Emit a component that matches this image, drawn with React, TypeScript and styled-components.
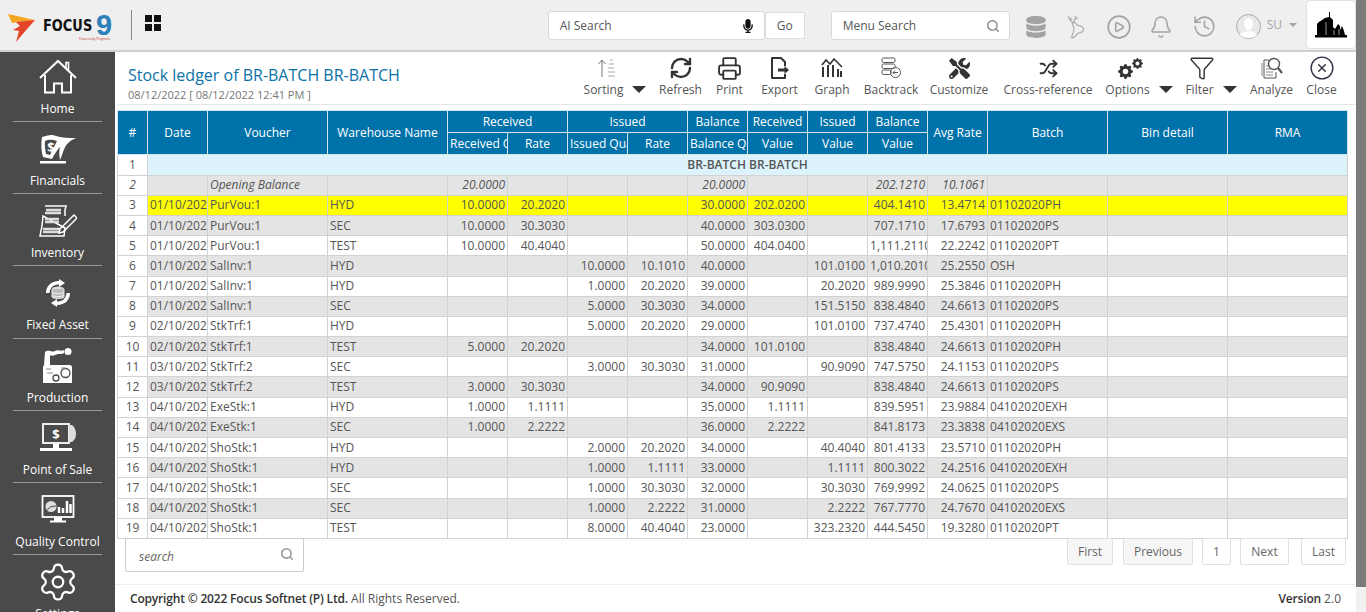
import React from 'react';
import styled, { createGlobalStyle } from 'styled-components';
import { RefreshCw, Printer, Shuffle, Funnel, CircleX, Settings, Search, Bell, History, CirclePlay } from 'lucide-react';
import { FaTools, FaDatabase, FaMicrophone } from 'react-icons/fa';
import { BsGearFill } from 'react-icons/bs';

const GlobalStyle = createGlobalStyle`
  html, body { margin: 0; padding: 0; height: 612px; overflow: hidden; background: #fff; }
  body { font-family: "Open Sans", "Liberation Sans", sans-serif; font-size: 12px; color: #555; }
  * { box-sizing: border-box; }
`;

type Row = (string | undefined)[];
const _ = undefined;

// idx, date, voucher, wh, recQ, recR, issQ, issR, balQ, recV, issV, balV, avg, batch
const rows: Row[] = [
  ['3', '01/10/2022', 'PurVou:1', 'HYD', '10.0000', '20.2020', _, _, '30.0000', '202.0200', _, '404.1410', '13.4714', '01102020PH'],
  ['4', '01/10/2022', 'PurVou:1', 'SEC', '10.0000', '30.3030', _, _, '40.0000', '303.0300', _, '707.1710', '17.6793', '01102020PS'],
  ['5', '01/10/2022', 'PurVou:1', 'TEST', '10.0000', '40.4040', _, _, '50.0000', '404.0400', _, '1,111.2110', '22.2242', '01102020PT'],
  ['6', '01/10/2022', 'SalInv:1', 'HYD', _, _, '10.0000', '10.1010', '40.0000', _, '101.0100', '1,010.2010', '25.2550', 'OSH'],
  ['7', '01/10/2022', 'SalInv:1', 'HYD', _, _, '1.0000', '20.2020', '39.0000', _, '20.2020', '989.9990', '25.3846', '01102020PH'],
  ['8', '01/10/2022', 'SalInv:1', 'SEC', _, _, '5.0000', '30.3030', '34.0000', _, '151.5150', '838.4840', '24.6613', '01102020PS'],
  ['9', '02/10/2022', 'StkTrf:1', 'HYD', _, _, '5.0000', '20.2020', '29.0000', _, '101.0100', '737.4740', '25.4301', '01102020PH'],
  ['10', '02/10/2022', 'StkTrf:1', 'TEST', '5.0000', '20.2020', _, _, '34.0000', '101.0100', _, '838.4840', '24.6613', '01102020PH'],
  ['11', '03/10/2022', 'StkTrf:2', 'SEC', _, _, '3.0000', '30.3030', '31.0000', _, '90.9090', '747.5750', '24.1153', '01102020PS'],
  ['12', '03/10/2022', 'StkTrf:2', 'TEST', '3.0000', '30.3030', _, _, '34.0000', '90.9090', _, '838.4840', '24.6613', '01102020PS'],
  ['13', '04/10/2022', 'ExeStk:1', 'HYD', '1.0000', '1.1111', _, _, '35.0000', '1.1111', _, '839.5951', '23.9884', '04102020EXH'],
  ['14', '04/10/2022', 'ExeStk:1', 'SEC', '1.0000', '2.2222', _, _, '36.0000', '2.2222', _, '841.8173', '23.3838', '04102020EXS'],
  ['15', '04/10/2022', 'ShoStk:1', 'HYD', _, _, '2.0000', '20.2020', '34.0000', _, '40.4040', '801.4133', '23.5710', '01102020PH'],
  ['16', '04/10/2022', 'ShoStk:1', 'HYD', _, _, '1.0000', '1.1111', '33.0000', _, '1.1111', '800.3022', '24.2516', '04102020EXH'],
  ['17', '04/10/2022', 'ShoStk:1', 'SEC', _, _, '1.0000', '30.3030', '32.0000', _, '30.3030', '769.9992', '24.0625', '01102020PS'],
  ['18', '04/10/2022', 'ShoStk:1', 'SEC', _, _, '1.0000', '2.2222', '31.0000', _, '2.2222', '767.7770', '24.7670', '04102020EXS'],
  ['19', '04/10/2022', 'ShoStk:1', 'TEST', _, _, '8.0000', '40.4040', '23.0000', _, '323.2320', '444.5450', '19.3280', '01102020PT'],
];

const colWidths = [30, 60, 120, 120, 60, 60, 60, 60, 60, 60, 60, 60, 60, 120, 120, 120];
const isText = (i: number) => i === 1 || i === 2 || i === 3 || i === 13;

/* sidebar drawings */
const HomeIcon = () => (
  <svg width="38" height="36" viewBox="0 0 38 36" fill="none" stroke="#fff" strokeWidth="2">
    <path d="M1 19 L19 2 L37 19" />
    <path d="M27 9 V3.5 H29.5 V12" strokeWidth="1.6" />
    <path d="M6 16 V33.5 H15 V24.5 H23 V33.5 H32 V16" />
  </svg>
);
const FinancialsIcon = () => (
  <svg width="38" height="30" viewBox="0 0 38 30" fill="#fff">
    <path d="M3 3 C10 1 13 0 17 2 C24 4 30 4 37 4 C30 7 27 10 24 18 C23 21 22 24 21 26 C20 21 20 17 21 13 C18 16 15 21 13 25 L4 23 C2 17 2 9 3 3 Z" />
    <path d="M6 7 C10 5 14 6 18 7 C16 11 14 15 11 21 L7 20 C6 15 5.5 11 6 7 Z" fill="#4a4a4a" />
    <rect x="1" y="27" width="26" height="2.500" />
    <text x="12" y="18" fontFamily="Open Sans" fontWeight="700" fontSize="13" textAnchor="middle">$</text>
  </svg>
);
const InventoryIcon = () => (
  <svg width="38" height="32" viewBox="0 0 38 32" fill="none" stroke="#fff" strokeWidth="1.500">
    <path d="M6 1 H27 L26 5 V11 M26 23 L25 31 H1 L3 21 L4 11 Z" />
    <path d="M7 5 H22 M6 8 H22 M6 14 H20 M6 17 H20 M4 24 H21 M4 27 H21" strokeWidth="2.500" stroke="#ddd" />
    <path d="M21 24 L35 10 L38 13 L24 27 L20 28 Z" />
  </svg>
);
const FixedAssetIcon = () => (
  <svg width="28" height="28" viewBox="0 0 28 28" fill="none">
    <path d="M2 14 C2 7 7 2 15 2 L15 0 L21 4 L15 8 L15 5.500 C10 5.500 6 8 5.500 14 Z" fill="#fff" />
    <path d="M26 14 C26 21 21 26 13 26 L13 28 L7 24 L13 20 L13 22.500 C18 22.500 22 20 22.500 14 Z" fill="#fff" />
    <ellipse cx="14" cy="10" rx="6" ry="2.500" fill="#ddd" />
    <path d="M8 10 V18 C8 20 20 20 20 18 V10" fill="#bbb" stroke="#fff" strokeWidth="0.800" />
    <path d="M8 13 C8 15 20 15 20 13 M8 16 C8 18 20 18 20 16" stroke="#fff" strokeWidth="0.800" />
  </svg>
);
const ProductionIcon = () => (
  <svg width="32" height="36" viewBox="0 0 32 36" fill="#fff">
    <path d="M2 17 L3 4 C7 1 10 5 13 3 C16 1 19 4 22 2 L22 5 C19 7 16 5 13 7 C10 9 9 6 8 8 L8 17 Z" />
    <circle cx="26" cy="3.500" r="3.500" />
    <path d="M1 19 C1 18 2 17 3 17 H28 C29 17 30 18 30 19 V35 H1 Z" />
    <g fill="#fff" stroke="#4a4a4a" strokeWidth="1.300">
      <circle cx="23.500" cy="25" r="4.500" />
      <circle cx="14" cy="30" r="3" />
    </g>
    <path d="M4 21 H9 M5 25 H11 M19 20 H24" stroke="#888" strokeWidth="1.200" />
  </svg>
);
const PosIcon = () => (
  <svg width="38" height="30" viewBox="0 0 38 30" fill="none" stroke="#fff">
    <rect x="4" y="1" width="26" height="19" strokeWidth="1.800" />
    <path d="M30 2 H33 C36 4 37 8 37 11 C37 14 36 17 33 19 H30 Z" fill="#ddd" stroke="none" />
    <path d="M14 21 H20 V25 H14 Z" fill="#fff" stroke="none" />
    <path d="M1 26.500 H33" strokeWidth="3" />
    <text x="17" y="16" fill="#fff" stroke="none" fontFamily="Open Sans" fontWeight="700" fontSize="13" textAnchor="middle">$</text>
  </svg>
);
const QualityIcon = () => (
  <svg width="34" height="30" viewBox="0 0 34 30" fill="none" stroke="#fff">
    <rect x="1.500" y="1" width="31" height="21" strokeWidth="1.800" />
    <circle cx="10" cy="11.500" r="5.500" fill="#ddd" stroke="none" />
    <path d="M10 11.500 L15 11 M10 11.500 L6 15" stroke="#4a4a4a" />
    <path d="M18 18 V12 M22 18 V13 M26 18 V6 M29.500 18 V9" strokeWidth="2.500" />
    <path d="M14 23 H20 V25 H14 Z M9 26.500 H25" strokeWidth="2" />
  </svg>
);

/* toolbar drawings */
const SortIcon = () => (
  <svg width="20" height="20" viewBox="0 0 20 20" fill="none" stroke="#777" strokeWidth="1">
    <path d="M6 19 V2 M2.500 6 L6 2 L9.500 6" />
    <path d="M14 2 H17 M13 6 H18 M12 10 H18 M12 14 H19 M12 18 H19" stroke="#aaa" />
  </svg>
);
const ExportIcon = () => (
  <svg width="20" height="22" viewBox="0 0 20 22" fill="none" stroke="#333" strokeWidth="2">
    <path d="M15 9 V5 L11 1 H2 V21 H15 V17" strokeLinejoin="round" />
    <path d="M8 13 H15" strokeWidth="3" />
    <path d="M14.500 9 L19 13 L14.500 17 Z" fill="#333" stroke="none" />
  </svg>
);
const GraphIcon = () => (
  <svg width="22" height="20" viewBox="0 0 22 20" fill="#333">
    <path d="M1 7 L5 2 L9 6 L13 1 L21 9" fill="none" stroke="#333" strokeWidth="1.600" />
    <path d="M1 9 H3 V19 H1 Z M6 7 H8 V19 H6 Z M11 7 H13 V19 H11 Z M16 11 H18 V19 H16 Z M19 13 H21 V19 H19 Z" />
  </svg>
);
const BacktrackIcon = () => (
  <svg width="22" height="22" viewBox="0 0 22 22" fill="none" stroke="#555" strokeWidth="1">
    <rect x="2" y="1" width="13" height="4.500" rx="1.500" />
    <rect x="2" y="7" width="13" height="4.500" rx="1.500" />
    <rect x="2" y="13" width="9" height="4.500" rx="1.500" />
    <circle cx="15.500" cy="15.500" r="5" />
    <path d="M13 15.500 H18 M15 13.500 L13 15.500 L15 17.500" />
  </svg>
);
const OptionsIcon = () => (
  <Gears>
    <BsGearFill size={15} />
    <BsGearFill size={11} />
  </Gears>
);
const AnalyzeIcon = () => (
  <svg width="22" height="22" viewBox="0 0 22 22" fill="none" stroke="#555" strokeWidth="1">
    <path d="M8 3 H3 V21 H15 V15" />
    <path d="M1 6 V19 M5 9 H9 M5 12 H9 M5 15 H12 M5 18 H12" stroke="#888" />
    <circle cx="13" cy="7" r="5.500" strokeWidth="1.400" />
    <path d="M17 11 L21 16" strokeWidth="2.200" />
  </svg>
);

const DeerIcon = () => (
  <svg width="17" height="24" viewBox="0 0 17 24" fill="none" stroke="#a8a8a8" strokeWidth="1.100">
    <path d="M1 1 L3 5 L5 3 M3 5 L6 8 L8 4 M8 4 L9 1 M8 4 L11 3" />
    <path d="M5 8 L7 13 C7 18 4 20 5 23 C8 23 9 20 11 18 C15 18 16.500 16 16.500 13 C15 11 12 11 10 10 L7 7" />
  </svg>
);
const SkylineIcon = () => (
  <svg width="32" height="26" viewBox="0 0 32 26" fill="#000">
    <path d="M0 23 H32 V25.500 H0 Z" />
    <path d="M2 23 V12 C4 9 8 8 10 6 L14 5 V0 H15 V5 L18 8 V15 L20 17 L23 12 L25 14 V18 L27 14 L29 19 L30 23 Z" />
    <path d="M11 10 V23 M19 18 V23 M24 17 V23" stroke="#fff" strokeWidth="0.600" />
  </svg>
);
const AvatarIcon = () => (
  <svg width="25" height="25" viewBox="0 0 25 25">
    <circle cx="12.500" cy="12.500" r="12" fill="#e9e9e9" stroke="#aaa" />
    <ellipse cx="12.500" cy="10" rx="4.500" ry="6" fill="#fff" />
    <path d="M4 21 C6 16 19 16 21 21 C17 25 8 25 4 21 Z" fill="#fff" />
  </svg>
);

const tools: { label: string; icon: React.ReactNode; caret?: boolean; w: number; ml?: number }[] = [
  { label: 'Sorting', icon: <SortIcon />, caret: true, w: 78 },
  { label: 'Refresh', icon: <RefreshCw size={24} color="#333" strokeWidth={2.400} />, w: 53 },
  { label: 'Print', icon: <Printer size={25} color="#333" strokeWidth={1.800} />, w: 45 },
  { label: 'Export', icon: <ExportIcon />, w: 55 },
  { label: 'Graph', icon: <GraphIcon />, w: 50 },
  { label: 'Backtrack', icon: <BacktrackIcon />, w: 60, ml: 4 },
  { label: 'Customize', icon: <FaTools size={21} color="#333" />, w: 76 },
  { label: 'Cross-reference', icon: <Shuffle size={19} color="#333" strokeWidth={2.400} />, w: 102 },
  { label: 'Options', icon: <OptionsIcon />, caret: true, w: 80 },
  { label: 'Filter', icon: <Funnel size={26} color="#333" strokeWidth={1.300} />, caret: true, w: 64 },
  { label: 'Analyze', icon: <AnalyzeIcon />, w: 57 },
  { label: 'Close', icon: <CircleX size={26} color="#334" strokeWidth={1.300} />, w: 43 },
];

const menu: { label: string; icon: React.ReactNode }[] = [
  { label: 'Home', icon: <HomeIcon /> },
  { label: 'Financials', icon: <FinancialsIcon /> },
  { label: 'Inventory', icon: <InventoryIcon /> },
  { label: 'Fixed Asset', icon: <FixedAssetIcon /> },
  { label: 'Production', icon: <ProductionIcon /> },
  { label: 'Point of Sale', icon: <PosIcon /> },
  { label: 'Quality Control', icon: <QualityIcon /> },
  { label: 'Settings', icon: <Settings size={42} color="#fff" strokeWidth={1.300} /> },
];

const App: React.FC = () => {
  return (
    <>
      <GlobalStyle />
      <Page>
        <Main>
          <TopBar>
            <Logo>
              <svg width="30" height="30" viewBox="0 0 30 30">
                <path d="M0 1 L27 7 L4 10 Z" fill="#f5a623" />
                <path d="M8 9 L27 7 L13 23 L8 29 L11 18 L5 17 L12 13 Z" fill="#e2452a" />
              </svg>
              <LogoWord>FOCUS</LogoWord>
              <LogoNine>9</LogoNine>
              <LogoTag>Powered by Pragmatic</LogoTag>
            </Logo>
            <Divider />
            <AppGrid>
              <i /><i /><i /><i />
            </AppGrid>
            <Spacer />
            <SearchBox $w={217}>
              <span>AI Search</span>
              <FaMicrophone size={14} color="#111" />
            </SearchBox>
            <GoButton>Go</GoButton>
            <SearchBox $w={179}>
              <span>Menu Search</span>
              <Search size={14} color="#888" strokeWidth={2.400} />
            </SearchBox>
            <TopIcons>
              <FaDatabase size={22} color="#a3a3a3" />
              <DeerSlot><DeerIcon /></DeerSlot>
              <CirclePlay size={26} color="#a3a3a3" strokeWidth={1.500} />
              <BellSlot><Bell size={24} color="#a3a3a3" strokeWidth={1.500} /></BellSlot>
              <History size={25} color="#a3a3a3" strokeWidth={1.500} />
              <User>
                <AvatarIcon />
                <span>SU</span>
                <SmallCaret />
              </User>
            </TopIcons>
            <CompanyLogo>
              <SkylineIcon />
            </CompanyLogo>
          </TopBar>
          <Body>
            <Sidebar>
              {menu.map((m) => (
                <MenuItem key={m.label}>
                  <MenuIcon>{m.icon}</MenuIcon>
                  <MenuLabel>{m.label}</MenuLabel>
                </MenuItem>
              ))}
            </Sidebar>
            <Content>
              <ReportHead>
                <div>
                  <Title>Stock ledger of BR-BATCH BR-BATCH</Title>
                  <SubTitle>08/12/2022 [ 08/12/2022 12:41 PM ]</SubTitle>
                </div>
                <Toolbar>
                  {tools.map((t) => (
                    <Tool key={t.label} $w={t.w} $ml={t.ml}>
                      <ToolIcon $shift={t.caret}>{t.icon}</ToolIcon>
                      <ToolLabel>
                        {t.label}
                        {t.caret && <Caret />}
                      </ToolLabel>
                    </Tool>
                  ))}
                </Toolbar>
              </ReportHead>
              <TableWrap>
                <Table>
                  <colgroup>
                    {colWidths.map((w, i) => (
                      <col key={i} width={w} />
                    ))}
                  </colgroup>
                  <thead>
                    <HeadRow>
                      <Th rowSpan={2}>#</Th>
                      <Th rowSpan={2}>Date</Th>
                      <Th rowSpan={2}>Voucher</Th>
                      <Th rowSpan={2}>Warehouse Name</Th>
                      <Th colSpan={2}>Received</Th>
                      <Th colSpan={2}>Issued</Th>
                      <Th>Balance</Th>
                      <Th>Received</Th>
                      <Th>Issued</Th>
                      <Th>Balance</Th>
                      <Th rowSpan={2}>Avg Rate</Th>
                      <Th rowSpan={2}>Batch</Th>
                      <Th rowSpan={2}>Bin detail</Th>
                      <Th rowSpan={2}>RMA</Th>
                    </HeadRow>
                    <HeadRow>
                      <Th>Received Quantity</Th>
                      <Th>Rate</Th>
                      <Th>Issued Quantity</Th>
                      <Th>Rate</Th>
                      <Th>Balance Quantity</Th>
                      <Th>Value</Th>
                      <Th>Value</Th>
                      <Th>Value</Th>
                    </HeadRow>
                  </thead>
                  <tbody>
                    <tr>
                      <IndexCell>1</IndexCell>
                      <GroupCell colSpan={15}>BR-BATCH BR-BATCH</GroupCell>
                    </tr>
                    <tr>
                      <IndexCell $italic>2</IndexCell>
                      <Td $bg="#e4e4e4" />
                      <Td $bg="#e4e4e4" $italic>Opening Balance</Td>
                      <Td $bg="#e4e4e4" />
                      <Td $bg="#e4e4e4" $italic $right>20.0000</Td>
                      <Td $bg="#e4e4e4" />
                      <Td $bg="#e4e4e4" />
                      <Td $bg="#e4e4e4" />
                      <Td $bg="#e4e4e4" $italic $right>20.0000</Td>
                      <Td $bg="#e4e4e4" />
                      <Td $bg="#e4e4e4" />
                      <Td $bg="#e4e4e4" $italic $right>202.1210</Td>
                      <Td $bg="#e4e4e4" $italic $right>10.1061</Td>
                      <Td $bg="#e4e4e4" />
                      <Td $bg="#e4e4e4" />
                      <Td $bg="#e4e4e4" />
                    </tr>
                    {rows.map((r) => {
                      const n = Number(r[0]);
                      const bg = n === 3 ? '#ffff00' : n % 2 === 0 ? '#e4e4e4' : '#fff';
                      return (
                        <tr key={r[0]}>
                          <IndexCell>{r[0]}</IndexCell>
                          {r.slice(1).map((v, i) => (
                            <Td key={i} $bg={bg} $right={!isText(i + 1)}>{v}</Td>
                          ))}
                          <Td $bg={bg} />
                          <Td $bg={bg} />
                        </tr>
                      );
                    })}
                  </tbody>
                </Table>
              </TableWrap>
              <BelowTable>
                <TableSearch>
                  <em>search</em>
                  <Search size={14} color="#999" strokeWidth={2.800} />
                </TableSearch>
                <Pager>
                  <PageButton $w={46} $off>First</PageButton>
                  <PageButton $w={70} $off>Previous</PageButton>
                  <PageButton $w={29}>1</PageButton>
                  <PageButton $w={49}>Next</PageButton>
                  <PageButton $w={45}>Last</PageButton>
                </Pager>
              </BelowTable>
              <Footer>
                <span>
                  <strong>Copyright © 2022 Focus Softnet (P) Ltd.</strong> All Rights Reserved.
                </span>
                <span>
                  <strong>Version</strong> 2.0
                </span>
              </Footer>
            </Content>
          </Body>
        </Main>
        <ScrollTrack>
          <ScrollThumb />
        </ScrollTrack>
      </Page>
    </>
  );
};

export default App;

const Page = styled.div`
  display: flex;
  width: 1366px;
  height: 612px;
  overflow: hidden;
`;

const Main = styled.div`
  width: 1356px;
  display: flex;
  flex-direction: column;
`;

const ScrollTrack = styled.div`
  width: 10px;
  background: #f1f1f1;
`;

const ScrollThumb = styled.div`
  height: 587px;
  background: #7b7b7b;
`;

const TopBar = styled.header`
  height: 52px;
  flex: none;
  display: flex;
  align-items: flex-start;
  background: #efefef;
  border-bottom: 2px solid #cfcfcf;
`;

const Logo = styled.div`
  position: relative;
  width: 131px;
  height: 50px;
  padding: 13px 0 0 8px;
  display: flex;
  align-items: flex-start;

  svg { flex: none; margin-right: 5px; }
`;

const LogoWord = styled.span`
  width: 51px;
  font-family: "DejaVu Sans Condensed", "DejaVu Sans", sans-serif;
  font-weight: 700;
  font-size: 16px;
  line-height: 26px;
  color: #111;
  transform: scaleX(0.9);
  transform-origin: left center;
`;

const LogoNine = styled.span`
  font-family: "Liberation Sans", sans-serif;
  font-weight: 700;
  font-size: 29px;
  line-height: 24px;
  margin-left: 2px;
  color: #2c7fb8;
`;

const LogoTag = styled.span`
  position: absolute;
  left: 79px;
  top: 37px;
  font-size: 3px;
  color: #c33;
  white-space: nowrap;
`;

const Divider = styled.div`
  width: 1px;
  height: 30px;
  margin-top: 10px;
  background: #888;
`;

const AppGrid = styled.div`
  display: grid;
  grid-template-columns: 7px 7px;
  grid-auto-rows: 7px;
  gap: 2px;
  margin: 15px 0 0 13px;

  i { background: #111; }
`;

const Spacer = styled.div`
  flex: 1;
`;

const SearchBox = styled.div<{ $w: number }>`
  width: ${(p) => p.$w}px;
  height: 29px;
  margin-top: 11px;
  display: flex;
  align-items: center;
  justify-content: space-between;
  padding: 0 9px 0 11px;
  background: #fff;
  border: 1px solid #d9d9d9;
  border-radius: 3px;
  color: #555;
`;

const GoButton = styled.div`
  width: 40px;
  height: 27px;
  margin: 12px 26px 0 0;
  display: flex;
  align-items: center;
  justify-content: center;
  background: #fff;
  border: 1px solid #ddd;
  border-radius: 2px;
`;

const TopIcons = styled.div`
  display: flex;
  align-items: center;
  gap: 19px;
  height: 29px;
  margin: 12px 9px 0 15px;
`;

const DeerSlot = styled.div`
  display: flex;
  margin: 0 3px 0 1px;
`;

const BellSlot = styled.div`
  display: flex;
  margin-left: -2px;
`;

const User = styled.div`
  display: flex;
  align-items: center;
  gap: 6px;
  color: #a3a3a3;

  span { margin-top: -4px; }
`;

const SmallCaret = styled.i`
  width: 0;
  height: 0;
  margin: -4px 0 0 1px;
  border-left: 4px solid transparent;
  border-right: 4px solid transparent;
  border-top: 4px solid #a3a3a3;
`;

const CompanyLogo = styled.div`
  width: 50px;
  height: 49px;
  display: flex;
  align-items: center;
  justify-content: center;
  background: #fff;
  border: 1px solid #e2e2e2;
  border-radius: 4px;
`;

const Body = styled.div`
  flex: 1;
  display: flex;
  min-height: 0;
`;

const Sidebar = styled.nav`
  width: 115px;
  flex: none;
  overflow: hidden;
  background: #4a4a4a;
  padding: 0 13px;
`;

const MenuItem = styled.div`
  height: 72.2px;
  display: flex;
  flex-direction: column;
  align-items: center;
  border-bottom: 1px solid #9a9a9a;

  &:first-child { height: 70px; }
  &:first-child > div:first-child { margin-top: 6px; }
`;

const MenuIcon = styled.div`
  height: 38px;
  margin-top: 8px;
  display: flex;
  align-items: center;
  justify-content: center;
  flex: none;
`;

const MenuLabel = styled.div`
  color: #fff;
  font-size: 12px;
  line-height: 16px;
  margin-top: 5px;
  white-space: nowrap;
`;

const Content = styled.main`
  flex: 1;
  min-width: 0;
  display: flex;
  flex-direction: column;
  background: #fff;
`;

const ReportHead = styled.div`
  height: 53px;
  flex: none;
  display: flex;
  justify-content: space-between;
  padding: 0 13px 0 11px;
  margin: 0 0 0 2px;
  border-bottom: 1px solid #e6e6e6;
`;

const Title = styled.div`
  margin-top: 11px;
  font-size: 16px;
  line-height: 24px;
  font-weight: 500;
  color: #0b72a8;
  white-space: nowrap;
`;

const SubTitle = styled.div`
  margin-top: 1px;
  font-size: 11px;
  line-height: 14px;
  color: #777;
  white-space: nowrap;
`;

const Toolbar = styled.div`
  display: flex;
  align-items: flex-start;
  padding-top: 4px;
`;

const Tool = styled.div<{ $w: number; $ml?: number }>`
  width: ${(p) => p.$w}px;
  margin-left: ${(p) => p.$ml ?? 0}px;
  display: flex;
  flex-direction: column;
  align-items: center;
`;

const ToolIcon = styled.div<{ $shift?: boolean }>`
  height: 24px;
  display: flex;
  align-items: center;
  justify-content: center;
  ${(p) => (p.$shift ? 'margin-right: 18px;' : '')}
`;

const Gears = styled.div`
  display: flex;
  align-items: flex-start;
  height: 22px;
  color: #333;

  svg:first-child { margin-top: 7px; }
  svg:last-child { margin-left: -1px; margin-top: 1px; }
`;

const ToolLabel = styled.div`
  display: flex;
  align-items: center;
  margin-top: 1px;
  font-size: 12px;
  line-height: 17px;
  color: #555;
  white-space: nowrap;
`;

const Caret = styled.i`
  width: 0;
  height: 0;
  margin-left: 9px;
  border-left: 7px solid transparent;
  border-right: 7px solid transparent;
  border-top: 7px solid #333;
`;

const TableWrap = styled.div`
  padding: 5px 0 0 2px;
  flex: none;
`;

const Table = styled.table`
  width: 1230px;
  table-layout: fixed;
  border-collapse: collapse;
  font-size: 12px;
  color: #555;
`;

const HeadRow = styled.tr`
  height: 22.200px;
`;

const Th = styled.th`
  padding: 0 2px;
  background: #0072aa;
  border: 1px solid #d5e3ea;
  color: #fff;
  font-weight: 400;
  text-align: center;
  white-space: nowrap;
  overflow: hidden;
`;

const Td = styled.td<{ $bg?: string; $right?: boolean; $italic?: boolean }>`
  height: 20.200px;
  padding: 0 2px;
  line-height: 16px;
  background: ${(p) => p.$bg ?? '#fff'};
  border: 1px solid #d2d2d2;
  text-align: ${(p) => (p.$right ? 'right' : 'left')};
  font-style: ${(p) => (p.$italic ? 'italic' : 'normal')};
  white-space: nowrap;
  overflow: hidden;
`;

const IndexCell = styled(Td)`
  text-align: center;
`;

const GroupCell = styled(Td)`
  background: #dcf3fc;
  text-align: center;
  font-weight: 600;
`;

const BelowTable = styled.div`
  flex: none;
  height: 46px;
  margin-top: -1px;
  display: flex;
  justify-content: space-between;
  align-items: flex-start;
  padding: 0 10px 0 10px;
`;

const TableSearch = styled.div`
  width: 179px;
  height: 34px;
  display: flex;
  align-items: center;
  justify-content: space-between;
  padding: 4px 9px 0 13px;
  border: 1px solid #ccc;
  border-radius: 2px;
  color: #666;

  svg { margin-top: -5px; }
`;

const Pager = styled.div`
  display: flex;
  gap: 9px;
`;

const PageButton = styled.div<{ $w: number; $off?: boolean }>`
  width: ${(p) => p.$w}px;
  height: 27px;
  display: flex;
  align-items: center;
  justify-content: center;
  border: 1px solid #e0e0e0;
  border-radius: 2px;
  background: ${(p) => (p.$off ? '#f6f6f6' : '#fff')};
  color: #666;

  &:nth-child(2) { margin-left: 1px; }
  &:last-child { margin-left: 3px; }
`;

const Footer = styled.footer`
  flex: 1;
  display: flex;
  justify-content: space-between;
  align-items: center;
  padding: 1px 15px 0;
  border-top: 1px solid #eee;
  color: #555;

  strong { font-weight: 600; color: #333; letter-spacing: -0.18px; }
`;
